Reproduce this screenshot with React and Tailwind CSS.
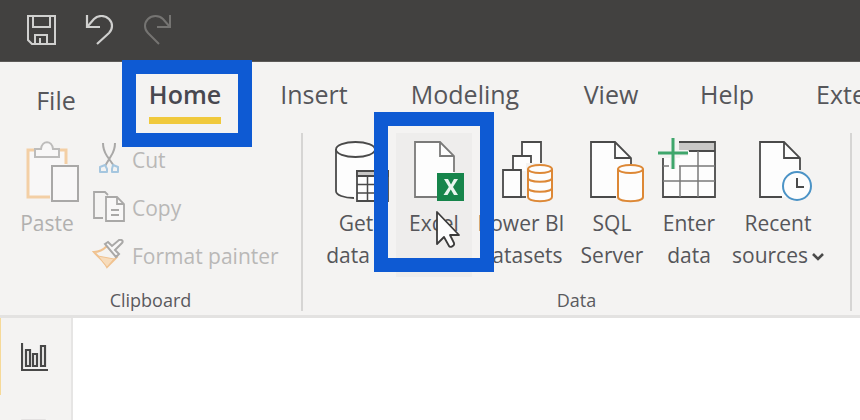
import React from "react";

const FOLD_STROKE = "#4a4a4a";

function SaveIcon() {
  return (
    <svg width="30" height="30" viewBox="0 0 30 30" fill="none" stroke="#d0d0cf" strokeWidth="2">
      <path d="M1 1H28V29H5L1 25Z" />
      <path d="M6 1V12H23V1" />
      <path d="M8 29V20H20V29M13 23V29" />
    </svg>
  );
}

function UndoIcon() {
  return (
    <svg width="30" height="30" viewBox="0 0 30 30" fill="none" stroke="#d0d0cf" strokeWidth="2.2">
      <path d="M2 0V12H15" />
      <path d="M2 12L9 4C13 0 20 0 24 4C28 8 28 14 24 18L12 29" />
    </svg>
  );
}

function RedoIcon() {
  return (
    <svg width="30" height="30" viewBox="0 0 30 30" fill="none" stroke="#757472" strokeWidth="2">
      <path d="M27 0V12H14" />
      <path d="M27 12L20 4C16 0 9 0 5 4C1 8 1 14 5 18L16 29" />
    </svg>
  );
}

function PasteIcon() {
  return (
    <svg width="72" height="66" viewBox="0 0 72 66" fill="#f8f7f7" strokeWidth="2">
      <path d="M16 13H56V60H16Z" stroke="none" />
      <path d="M24 13H17V60H39M48 13H55V27" fill="none" stroke="#f3cfa5" strokeWidth="3" />
      <path d="M24 20V12H30C31 3 41 3 42 12H48V20Z" stroke="#bdbcbb" />
      <path d="M41 29H67V64H41Z" stroke="#a9a8a7" />
    </svg>
  );
}

function CutIcon() {
  return (
    <svg width="34" height="34" viewBox="0 0 34 34" fill="none" strokeWidth="2">
      <path d="M11 0C11 6 13 10 15 13L22 23M23 0C23 6 21 10 19 13L13 23" stroke="#a9a8a7" />
      <path d="M8 24L13 22L15 26V29H8ZM26 24L21 22L20 26V29H26Z" stroke="#a5c6df" strokeLinejoin="round" />
    </svg>
  );
}

function CopyIcon() {
  return (
    <svg width="34" height="34" viewBox="0 0 34 34" fill="none" stroke="#a9a8a7" strokeWidth="1.8">
      <path d="M11 27H2V1H13L16 4" />
      <path d="M14 6H25L32 13V30H14Z" fill="#f8f7f7" />
      <path d="M25 6V13H32M19 19H27M19 24H27" />
    </svg>
  );
}

function PainterIcon() {
  return (
    <svg width="34" height="34" viewBox="0 0 34 34" fill="none" strokeWidth="2">
      <path d="M2 13C7 13 11 11 15 7L25 18L15 28C12 22 7 19 2 13Z" stroke="#f0c290" />
      <path d="M6 17L22 20L15 28Z" fill="#f7dcbc" stroke="#f0c290" strokeWidth="1" />
      <path d="M13 5L16 3L20 7L27 1C29 0 32 2 30 4L23 11L27 15L24 18Z" fill="#f8f7f7" stroke="#a9a8a7" />
    </svg>
  );
}

function GetDataIcon() {
  return (
    <svg width="72" height="66" viewBox="0 0 72 66" fill="none" stroke={FOLD_STROKE} strokeWidth="1.8">
      <path d="M16 12V54C16 58 24 61 35 61H55V12Z" fill="#fdfdfd" stroke="none" />
      <path d="M16 12V54C16 58 24 61 34 61M55 12V34" />
      <ellipse cx="35.5" cy="12.5" rx="19.5" ry="7.5" fill="#fdfdfd" />
      <path d="M37 34H68V64H37Z" fill="#fdfdfd" />
      <path d="M37 34H68V39H37Z" fill="#c8c7c6" />
      <path d="M37 47.5H68M37 56H68M47.5 39V64M57.5 39V64" strokeWidth="1.5" />
    </svg>
  );
}

function ExcelIcon() {
  return (
    <svg width="72" height="66" viewBox="0 0 72 66" fill="none" stroke="#7a7a79" strokeWidth="1.8">
      <path d="M17 60V5H42L56 19V60Z" fill="#fdfdfd" stroke="none" />
      <path d="M39 60H17V5H42L56 19V35M42 5V19H56" />
      <path d="M39 36H66V64H39Z" fill="#16854b" stroke="none" />
      <path d="M46 42H50L53 47.500L56 42H60L55 50L60 58H56L52.800 52.500L49.500 58H45.500L50.800 50Z" fill="#e8f5ee" stroke="none" />
    </svg>
  );
}

function DatasetsIcon() {
  return (
    <svg width="72" height="66" viewBox="0 0 72 66" fill="#fdfdfd" stroke={FOLD_STROKE} strokeWidth="1.8">
      <path d="M37 34V5H56V34" />
      <path d="M28 34V19H46V34" />
      <path d="M18 33H36V60H18Z" />
      <path d="M36 60H41" />
      <path d="M41 26H69V66H41Z" fill="#f4f3f2" stroke="none" />
      <g stroke="#dd8836" strokeWidth="2">
        <path d="M43 32V60C43 65.500 67 65.500 67 60V32" />
        <ellipse cx="55" cy="32" rx="12" ry="4" />
        <path d="M43 41C43 46 67 46 67 41M43 51C43 56 67 56 67 51" fill="none" />
      </g>
    </svg>
  );
}

function SqlIcon() {
  return (
    <svg width="72" height="66" viewBox="0 0 72 66" fill="none" stroke={FOLD_STROKE} strokeWidth="1.8">
      <path d="M15 60V5H39L55 21V60Z" fill="#fdfdfd" stroke="none" />
      <path d="M40 60H15V5H39L55 21V27M39 5V21H55" />
      <g fill="#fdfdfd" stroke="#dd8836" strokeWidth="2">
        <path d="M42 32V60C42 65.500 67 65.500 67 60V32" />
        <ellipse cx="54.500" cy="32" rx="12.500" ry="4" />
      </g>
    </svg>
  );
}

function EnterDataIcon() {
  return (
    <svg width="72" height="66" viewBox="0 0 72 66" fill="none" stroke={FOLD_STROKE} strokeWidth="1.8">
      <path d="M10 21H27V14H62V60H10Z" fill="#fdfdfd" stroke="none" />
      <path d="M26 5H62V14H26Z" fill="#c8c7c6" stroke="none" />
      <path d="M26 5H62V60H10V21M36 14H62" />
      <path d="M10 29H16M26 29H62M10 44H62M27 29V60M45 14V60" stroke="#7a7a79" strokeWidth="1.5" />
      <path d="M20 1V32M5 16H35" stroke="#f4f3f2" strokeWidth="6" />
      <path d="M20 1V32M5 16H35" stroke="#3fa66c" strokeWidth="3" />
    </svg>
  );
}

function RecentIcon() {
  return (
    <svg width="72" height="66" viewBox="0 0 72 66" fill="none" stroke={FOLD_STROKE} strokeWidth="1.8">
      <path d="M18 60V5H42L58 21V60Z" fill="#fdfdfd" stroke="none" />
      <path d="M40 60H18V5H42L58 21V33M42 5V21H58" />
      <circle cx="55" cy="49" r="14" fill="#fdfdfd" stroke="#4b93c6" strokeWidth="2" />
      <path d="M55 41V50H62" strokeWidth="2" />
    </svg>
  );
}

function Chevron() {
  return (
    <svg className="ml-1 inline-block" width="12" height="8" viewBox="0 0 12 8" fill="none" stroke="#4a4a4a" strokeWidth="2.6">
      <path d="M1 1L6 6L11 1" />
    </svg>
  );
}

function Pointer() {
  return (
    <svg className="absolute top-[77px] left-[39px] z-20" width="28" height="42" viewBox="0 0 28 42" aria-hidden="true">
      <path
        d="M2 2V34L9 27L14 36C15 38 20 36 19 33L15 25H24Z"
        fill="#fdfdfd"
        stroke="#3b3b3b"
        strokeWidth="1.8"
        strokeLinejoin="round"
      />
    </svg>
  );
}

function Tab({ className, active, children }) {
  return (
    <button
      type="button"
      role="tab"
      aria-selected={Boolean(active)}
      className={`relative flex shrink-0 flex-col items-center text-[25px] leading-8 whitespace-nowrap ${className}`}
    >
      {active ? (
        <>
          <span className="flex flex-col gap-[7px] font-semibold text-[#484850]">
            {children}
            <span className="h-[7px] bg-[#f0c93c]" />
          </span>
          <span className="absolute -top-[18px] left-[10px] z-10 h-[87px] w-[130px] border-14 border-[#0e5ad3]" />
        </>
      ) : (
        children
      )}
    </button>
  );
}

function LargeButton({ icon, className, lines, menu, children, disabled }) {
  return (
    <button
      type="button"
      disabled={disabled}
      className={`relative flex shrink-0 flex-col items-center pt-1 pb-1.5 text-[21px] leading-8 whitespace-nowrap ${className}`}
    >
      {icon}
      <span className="mt-1 block">
        {lines.map((line, i) => (
          <span key={line} className="block">
            {line}
            {menu && i === lines.length - 1 && <Chevron />}
          </span>
        ))}
      </span>
      {children}
    </button>
  );
}

function SmallButton({ icon, label }) {
  return (
    <button type="button" disabled className="flex h-12 items-center gap-1.5 text-[21px] leading-8 whitespace-nowrap text-[#b9b8b7]">
      {icon}
      {label}
    </button>
  );
}

function Group({ label, className, children }) {
  return (
    <section aria-label={label} className={`flex shrink-0 flex-col justify-between border-r-2 border-[#d6d5d4] ${className}`}>
      <div className="flex">{children}</div>
      <h2 className="text-center text-lg leading-[22px] text-[#5a5a5e]">{label}</h2>
    </section>
  );
}

export default function App() {
  return (
    <div className="flex h-screen flex-col overflow-hidden bg-white font-['Open_Sans','Noto_Sans',sans-serif] text-[#56565a]">
      <header className="flex items-center gap-7 border-b border-[#5c5a58] bg-[#424140] px-[27px] pt-[15px] pb-4">
        <button type="button" aria-label="Save"><SaveIcon /></button>
        <button type="button" aria-label="Undo"><UndoIcon /></button>
        <button type="button" aria-label="Redo"><RedoIcon /></button>
      </header>

      <div className="border-b-3 border-[#e3e2e1] bg-[#f4f3f2] pb-1">
        <div role="tablist" className="flex items-start pt-4 pb-[9px]">
          <Tab className="w-28 pt-1.5">File</Tab>
          <Tab className="w-[146px]" active>Home</Tab>
          <Tab className="w-28">Insert</Tab>
          <Tab className="w-[190px]">Modeling</Tab>
          <Tab className="w-[102px]">View</Tab>
          <Tab className="w-[130px]">Help</Tab>
          <Tab className="pl-6">External tools</Tab>
        </div>

        <div className="flex h-[178px]">
          <Group label="Clipboard" className="w-[303px]">
            <LargeButton icon={<PasteIcon />} className="ml-[7px] w-20 text-[#b1b0af]" lines={["Paste"]} disabled />
            <div className="flex flex-col pt-[3px] pl-[5px]">
              <SmallButton icon={<CutIcon />} label="Cut" />
              <SmallButton icon={<CopyIcon />} label="Copy" />
              <SmallButton icon={<PainterIcon />} label="Format painter" />
            </div>
          </Group>

          <Group label="Data" className="w-[549px]">
            <div className="flex gap-0.5 pl-[15px]">
              <LargeButton icon={<GetDataIcon />} className="w-[76px]" lines={["Get", "data"]} menu />
              <LargeButton icon={<ExcelIcon />} className="w-[76px] bg-[#eeedec]" lines={["Excel"]}>
                <span className="absolute -top-[21px] -left-[22px] z-10 h-40 w-[120px] border-14 border-[#0e5ad3]" />
                <Pointer />
              </LargeButton>
              <LargeButton icon={<DatasetsIcon />} className="w-[94px]" lines={["Power BI", "datasets"]} />
              <LargeButton icon={<SqlIcon />} className="w-[84px]" lines={["SQL", "Server"]} />
              <LargeButton icon={<EnterDataIcon />} className="w-[66px]" lines={["Enter", "data"]} />
              <LargeButton icon={<RecentIcon />} className="w-[108px]" lines={["Recent", "sources"]} menu />
            </div>
          </Group>
        </div>
      </div>

      <div className="flex min-h-0 flex-1">
        <nav aria-label="Views" className="w-[73px] shrink-0 border-r-2 border-[#e6e5e4] bg-[#f4f3f2]">
          <button type="button" aria-label="Report view" className="flex h-[77px] w-full border-l border-[#f6d998] pt-6 pl-5">
            <svg width="28" height="30" viewBox="0 0 28 30" fill="none" stroke="#484848" strokeWidth="2.2">
              <path d="M1 1V28H27" />
              <path d="M5 8H9V24H5ZM12 12H16V24H12ZM20 4H24V24H20Z" />
            </svg>
          </button>
          <button type="button" aria-label="Data view" className="flex w-full pt-6 pl-[21px]">
            <svg width="26" height="26" viewBox="0 0 26 26" fill="none" stroke="#dddcdb" strokeWidth="1.5">
              <path d="M1 1H24V24H1ZM1 8H24M1 16H24M9 8V24M17 8V24" />
            </svg>
          </button>
        </nav>
        <main className="flex-1 bg-white" />
      </div>
    </div>
  );
}
